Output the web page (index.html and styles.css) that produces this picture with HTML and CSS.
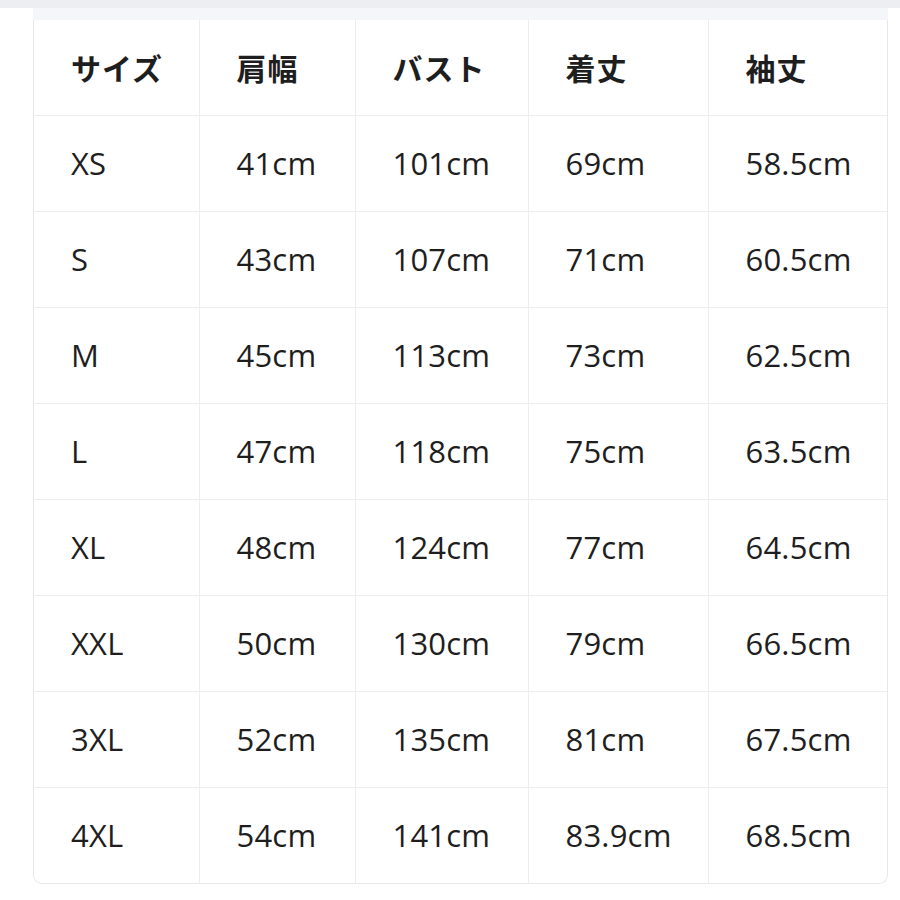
FILE: index.html
```html
<!DOCTYPE html>
<html lang="ja">
<head>
<meta charset="utf-8">
<link rel="stylesheet" href="styles.css">
</head>
<body>
<div class="topbar"></div>
<div class="wrap">
  <div class="card">
    <div class="strip"></div>
    <div class="frame">
      <table class="sizes">
        <colgroup>
          <col class="c1"><col class="c2"><col class="c3"><col class="c4"><col class="c5">
        </colgroup>
        <thead>
          <tr><th>サイズ</th><th>肩幅</th><th>バスト</th><th>着丈</th><th>袖丈</th></tr>
        </thead>
        <tbody>
          <tr><td>XS</td><td>41cm</td><td>101cm</td><td>69cm</td><td>58.5cm</td></tr>
          <tr><td>S</td><td>43cm</td><td>107cm</td><td>71cm</td><td>60.5cm</td></tr>
          <tr><td>M</td><td>45cm</td><td>113cm</td><td>73cm</td><td>62.5cm</td></tr>
          <tr><td>L</td><td>47cm</td><td>118cm</td><td>75cm</td><td>63.5cm</td></tr>
          <tr><td>XL</td><td>48cm</td><td>124cm</td><td>77cm</td><td>64.5cm</td></tr>
          <tr><td>XXL</td><td>50cm</td><td>130cm</td><td>79cm</td><td>66.5cm</td></tr>
          <tr><td>3XL</td><td>52cm</td><td>135cm</td><td>81cm</td><td>67.5cm</td></tr>
          <tr><td>4XL</td><td>54cm</td><td>141cm</td><td>83.9cm</td><td>68.5cm</td></tr>
        </tbody>
      </table>
    </div>
  </div>
</div>
</body>
</html>
```
FILE: styles.css
```css
html, body {
  margin: 0;
  padding: 0;
  background: #ffffff;
}
.topbar {
  height: 8px;
  background: #eceef1;
}
.wrap {
  padding: 0 12px 0 33px;
}
.card {
  width: 855px;
}
.strip {
  height: 12px;
  background: #f4f6f9;
}
.frame {
  border: 1px solid #e8e8e8;
  border-top: none;
  border-radius: 0 0 9px 9px;
  overflow: hidden;
  background: #fff;
}
.sizes {
  width: 100%;
  border-collapse: collapse;
  table-layout: fixed;
  color: #1e1e1e;
}
.c1 { width: 165px; }
.c2 { width: 156px; }
.c3 { width: 173px; }
.c4 { width: 180px; }
.c5 { width: auto; }
.sizes th, .sizes td {
  text-align: left;
  padding: 0 0 0 37px;
  border-right: 1px solid #ededed;
  border-bottom: 1px solid #ededed;
  white-space: nowrap;
}
.sizes th:last-child, .sizes td:last-child {
  border-right: none;
}
.sizes tbody tr:last-child td {
  border-bottom: none;
}
.sizes thead tr {
  height: 95px;
}
.sizes tbody tr {
  height: 96px;
}
.sizes th {
  font-family: "Noto Sans CJK JP", "Noto Sans", sans-serif;
  font-weight: 700;
  font-size: 30px;
  letter-spacing: 1px;
}
.sizes td {
  font-family: "Open Sans", "Noto Sans", sans-serif;
  font-weight: 400;
  font-size: 31px;
  letter-spacing: 0.2px;
}
```
